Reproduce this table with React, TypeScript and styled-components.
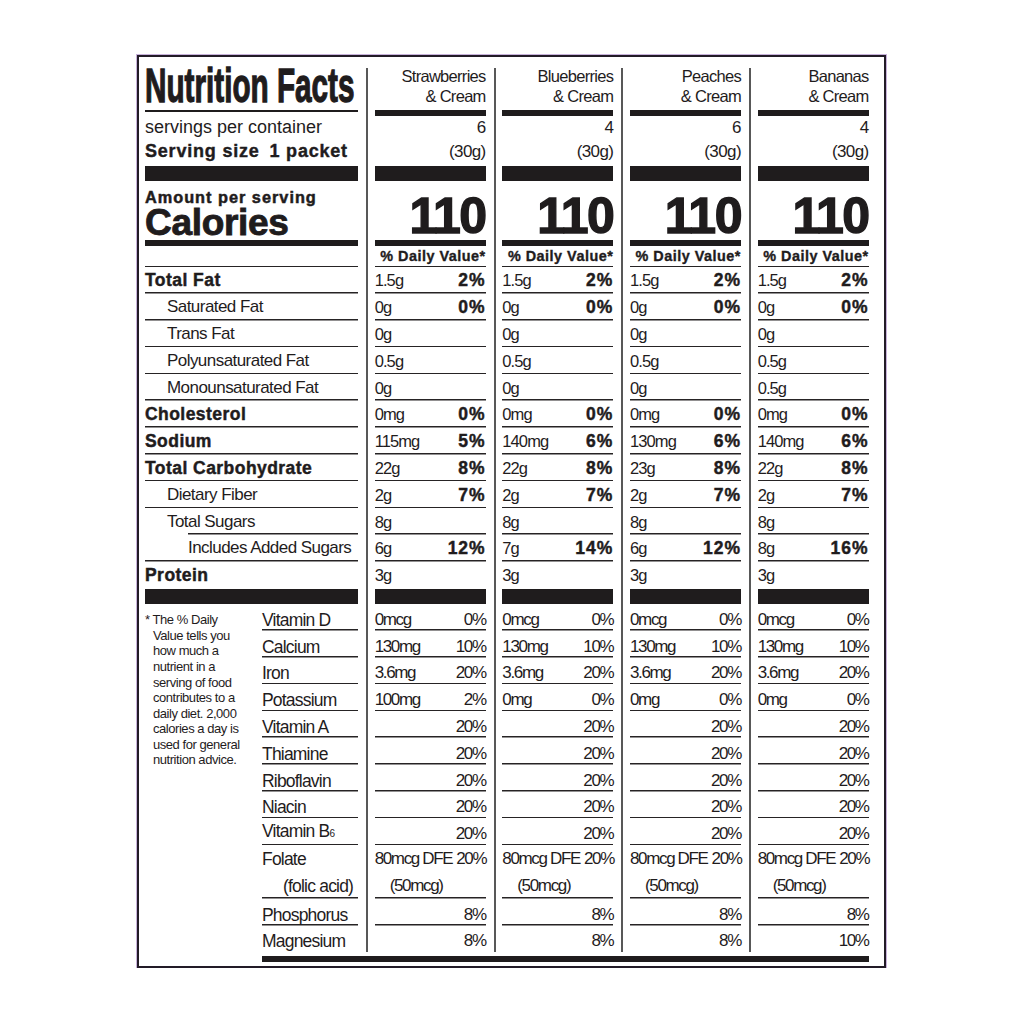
import React from 'react';
import styled, { createGlobalStyle, css } from 'styled-components';

const INK = '#1f1c1d';
const LINE = '#262324';
const ROW = 26.8;

type Nutrient = { label: string; bold?: boolean; indent?: number; lineIndent?: number };
type Flavor = {
  name: [string, string];
  servings: string;
  macros: [string, string?][];
  vitamins: [string, string][];
};

const NUTRIENTS: Nutrient[] = [
  { label: 'Total Fat', bold: true },
  { label: 'Saturated Fat', indent: 22 },
  { label: 'Trans Fat', indent: 22 },
  { label: 'Polyunsaturated Fat', indent: 22 },
  { label: 'Monounsaturated Fat', indent: 22 },
  { label: 'Cholesterol', bold: true },
  { label: 'Sodium', bold: true },
  { label: 'Total Carbohydrate', bold: true },
  { label: 'Dietary Fiber', indent: 22 },
  { label: 'Total Sugars', indent: 22, lineIndent: 43 },
  { label: 'Includes Added Sugars', indent: 43 },
  { label: 'Protein', bold: true },
];

const VITAMINS = [
  'Vitamin D',
  'Calcium',
  'Iron',
  'Potassium',
  'Vitamin A',
  'Thiamine',
  'Riboflavin',
  'Niacin',
  'Vitamin B6',
  'Folate',
  'Phosphorus',
  'Magnesium',
];

const sameVitamins = (potassium: [string, string], magnesium: string): [string, string][] => [
  ['0mcg', '0%'],
  ['130mg', '10%'],
  ['3.6mg', '20%'],
  potassium,
  ['', '20%'],
  ['', '20%'],
  ['', '20%'],
  ['', '20%'],
  ['', '20%'],
  ['80mcg DFE', '20%'],
  ['', '8%'],
  ['', magnesium],
];

const FLAVORS: Flavor[] = [
  {
    name: ['Strawberries', '& Cream'],
    servings: '6',
    macros: [
      ['1.5g', '2%'], ['0g', '0%'], ['0g'], ['0.5g'], ['0g'], ['0mg', '0%'],
      ['115mg', '5%'], ['22g', '8%'], ['2g', '7%'], ['8g'], ['6g', '12%'], ['3g'],
    ],
    vitamins: sameVitamins(['100mg', '2%'], '8%'),
  },
  {
    name: ['Blueberries', '& Cream'],
    servings: '4',
    macros: [
      ['1.5g', '2%'], ['0g', '0%'], ['0g'], ['0.5g'], ['0g'], ['0mg', '0%'],
      ['140mg', '6%'], ['22g', '8%'], ['2g', '7%'], ['8g'], ['7g', '14%'], ['3g'],
    ],
    vitamins: sameVitamins(['0mg', '0%'], '8%'),
  },
  {
    name: ['Peaches', '& Cream'],
    servings: '6',
    macros: [
      ['1.5g', '2%'], ['0g', '0%'], ['0g'], ['0.5g'], ['0g'], ['0mg', '0%'],
      ['130mg', '6%'], ['23g', '8%'], ['2g', '7%'], ['8g'], ['6g', '12%'], ['3g'],
    ],
    vitamins: sameVitamins(['0mg', '0%'], '8%'),
  },
  {
    name: ['Bananas', '& Cream'],
    servings: '4',
    macros: [
      ['1.5g', '2%'], ['0g', '0%'], ['0g'], ['0.5g'], ['0.5g'], ['0mg', '0%'],
      ['140mg', '6%'], ['22g', '8%'], ['2g', '7%'], ['8g'], ['8g', '16%'], ['3g'],
    ],
    vitamins: sameVitamins(['0mg', '0%'], '10%'),
  },
];

const ruled = (indent: number) => css`
  background: linear-gradient(${LINE}, ${LINE}) right bottom / calc(100% - ${indent}px) 1.5px no-repeat;
`;

const App = (): JSX.Element => {
  return (
    <Page>
      <GlobalStyle />
      <Frame>
        <Columns>
          <LabelCol>
            <HeadCell>
              <Title>Nutrition Facts</Title>
            </HeadCell>
            <Rule $h={6} $thin />
            <ServCell>
              <div>servings per container</div>
              <ServBold>Serving size{'\u2002'}1 packet</ServBold>
            </ServCell>
            <Rule $h={15} />
            <CalCell>
              <AmountLine>Amount per serving</AmountLine>
              <CaloriesLine>Calories</CaloriesLine>
            </CalCell>
            <Rule $h={6} />
            <DvCell />
            {NUTRIENTS.map((n, i) => (
              <NutRow
                key={n.label}
                $pad={n.indent}
                $lineIndent={n.lineIndent}
                $noLine={i === NUTRIENTS.length - 1}
              >
                <NutLabel $bold={n.bold}>{n.label}</NutLabel>
              </NutRow>
            ))}
            <Rule $h={15.4} />
            <Lower>
              <Footnote>
                * The % Daily
                <br />
                Value tells you
                <br />
                how much a
                <br />
                nutrient in a
                <br />
                serving of food
                <br />
                contributes to a
                <br />
                daily diet. 2,000
                <br />
                calories a day is
                <br />
                used for general
                <br />
                nutrition advice.
              </Footnote>
              <VitList>
                {VITAMINS.map((v, i) =>
                  v === 'Folate' ? (
                    <TallRow key={v}>
                      <SubLine>
                        <VitLabel>Folate</VitLabel>
                      </SubLine>
                      <SubLine $pad={21}>
                        <VitLabel>(folic acid)</VitLabel>
                      </SubLine>
                    </TallRow>
                  ) : (
                    <VitRow key={v} $noLine={i === VITAMINS.length - 1}>
                      <VitLabel>
                        {v === 'Vitamin B6' ? (
                          <>
                            Vitamin B<Sub>6</Sub>
                          </>
                        ) : (
                          v
                        )}
                      </VitLabel>
                    </VitRow>
                  ),
                )}
              </VitList>
            </Lower>
          </LabelCol>

          {FLAVORS.map((f) => (
            <DataCol key={f.name[0]}>
              <NameCell>
                <div>{f.name[0]}</div>
                <div>{f.name[1]}</div>
              </NameCell>
              <Rule $h={6} />
              <ServValue>
                <div>{f.servings}</div>
                <div>(30g)</div>
              </ServValue>
              <Rule $h={15} />
              <CalValue>110</CalValue>
              <Rule $h={6} />
              <DvCell>
                <DvText>% Daily Value*</DvText>
              </DvCell>
              {f.macros.map(([amt, pct], i) => (
                <NutRow key={i} $noLine={i === f.macros.length - 1}>
                  <Amount>{amt}</Amount>
                  {pct && <BoldPct>{pct}</BoldPct>}
                </NutRow>
              ))}
              <Rule $h={15.4} />
              {f.vitamins.map(([amt, pct], i) =>
                VITAMINS[i] === 'Folate' ? (
                  <TallRow key={i}>
                    <SubLine>
                      <VitValue>{amt}</VitValue>
                      <VitValue>{pct}</VitValue>
                    </SubLine>
                    <SubLine $pad={15}>
                      <VitValue>(50mcg)</VitValue>
                    </SubLine>
                  </TallRow>
                ) : (
                  <VitRow key={i} $noLine={i === f.vitamins.length - 1}>
                    <VitValue>{amt}</VitValue>
                    <VitValue>{pct}</VitValue>
                  </VitRow>
                ),
              )}
            </DataCol>
          ))}
        </Columns>
        <BottomBar />
      </Frame>
    </Page>
  );
};

export default App;

const GlobalStyle = createGlobalStyle`
  *, *::before, *::after {
    box-sizing: border-box;
  }

  html, body {
    margin: 0;
    padding: 0;
    background: #fff;
  }

  body {
    font-family: "Liberation Sans", Arial, sans-serif;
    color: ${INK};
  }
`;

const Page = styled.div`
  padding: 55px 0 0 137px;
`;

const Frame = styled.div`
  width: 748.67px;
  padding: 11px 15px 4px 6px;
  border: 2px solid #221b27;
  box-shadow: 0 0 0 1px #c7b2da;
`;

const Columns = styled.div`
  display: flex;
  align-items: stretch;
`;

const LabelCol = styled.div`
  flex: none;
  width: 213px;
  display: flex;
  flex-direction: column;
`;

const DataCol = styled.div`
  flex: none;
  width: 119.67px;
  margin-left: 8px;
  padding-left: 6.67px;
  border-left: 2px solid #585858;
  display: flex;
  flex-direction: column;
`;

const Rule = styled.div<{ $h: number; $thin?: boolean }>`
  flex: none;
  height: ${(p) => p.$h}px;
  background: ${(p) =>
    p.$thin ? `linear-gradient(${INK}, ${INK}) left top / 100% 2px no-repeat` : INK};
`;

const HeadCell = styled.div`
  flex: none;
  height: 42px;
  white-space: nowrap;
`;

const Title = styled.h1`
  display: inline-block;
  margin: 0;
  font-size: 47.5px;
  line-height: 35px;
  font-weight: 700;
  -webkit-text-stroke: 1.3px ${INK};
  transform: scaleX(0.625);
  transform-origin: left top;
`;

const NameCell = styled.div`
  flex: none;
  height: 42px;
  padding-bottom: 4px;
  display: flex;
  flex-direction: column;
  justify-content: flex-end;
  align-items: flex-end;
  font-size: 16.5px;
  line-height: 20px;
  letter-spacing: -0.7px;
  white-space: nowrap;
`;

const ServCell = styled.div`
  flex: none;
  height: 50px;
  font-size: 18px;
  line-height: 23.5px;
  white-space: nowrap;
`;

const ServBold = styled.div`
  font-weight: 700;
  letter-spacing: 0.8px;
  -webkit-text-stroke: 0.4px ${INK};
`;

const ServValue = styled.div`
  flex: none;
  height: 50px;
  text-align: right;
  font-size: 17px;
  line-height: 23.5px;
  letter-spacing: -0.6px;
`;

const CalCell = styled.div`
  flex: none;
  height: 59px;
  padding-top: 6.9px;
  font-weight: 700;
  white-space: nowrap;
`;

const AmountLine = styled.div`
  font-size: 16.3px;
  line-height: 18.5px;
  letter-spacing: 1px;
  -webkit-text-stroke: 0.5px ${INK};
`;

const CaloriesLine = styled.div`
  margin-top: 1px;
  font-size: 37px;
  line-height: 32px;
  letter-spacing: -0.3px;
  -webkit-text-stroke: 0.9px ${INK};
`;

const CalValue = styled.div`
  flex: none;
  height: 59px;
  padding-top: 9.7px;
  text-align: right;
  font-size: 50px;
  line-height: 50px;
  font-weight: 700;
  letter-spacing: -1.5px;
  -webkit-text-stroke: 1.4px ${INK};
`;

const DvCell = styled.div`
  flex: none;
  height: 21px;
  display: flex;
  justify-content: flex-end;
  align-items: center;
  ${ruled(0)}
`;

const DvText = styled.span`
  font-size: 14.4px;
  line-height: 21px;
  font-weight: 700;
  letter-spacing: 0.5px;
  white-space: nowrap;
  -webkit-text-stroke: 0.35px ${INK};
`;

const NutRow = styled.div<{ $pad?: number; $lineIndent?: number; $noLine?: boolean }>`
  flex: none;
  height: ${ROW}px;
  display: flex;
  align-items: center;
  justify-content: space-between;
  padding-left: ${(p) => p.$pad ?? 0}px;
  line-height: 20px;
  white-space: nowrap;
  ${(p) => !p.$noLine && ruled(p.$lineIndent ?? 0)}
`;

const NutLabel = styled.span<{ $bold?: boolean }>`
  font-size: ${(p) => (p.$bold ? 17.5 : 17)}px;
  font-weight: ${(p) => (p.$bold ? 700 : 400)};
  letter-spacing: ${(p) => (p.$bold ? 0.45 : -0.55)}px;
  -webkit-text-stroke: ${(p) => (p.$bold ? `0.45px ${INK}` : '0')};
`;

const Amount = styled.span`
  font-size: 16.5px;
  letter-spacing: -0.9px;
`;

const BoldPct = styled.span`
  font-size: 17.5px;
  font-weight: 700;
  letter-spacing: 1px;
  -webkit-text-stroke: 0.45px ${INK};
`;

const Lower = styled.div`
  display: flex;
`;

const Footnote = styled.p`
  flex: none;
  width: 117px;
  margin: 0;
  padding: 8.2px 0 0 8px;
  text-indent: -8px;
  font-size: 13px;
  line-height: 15.6px;
  letter-spacing: -0.45px;
  white-space: nowrap;
`;

const VitList = styled.div`
  flex: 1;
  display: flex;
  flex-direction: column;
`;

const VitRow = styled.div<{ $noLine?: boolean }>`
  flex: none;
  height: ${ROW}px;
  display: flex;
  align-items: flex-end;
  justify-content: space-between;
  padding-bottom: 1px;
  line-height: 20px;
  white-space: nowrap;
  ${(p) => !p.$noLine && ruled(0)}
`;

const TallRow = styled.div`
  flex: none;
  height: ${ROW * 2}px;
  display: flex;
  flex-direction: column;
  ${ruled(0)}
`;

const SubLine = styled.div<{ $pad?: number }>`
  height: ${ROW}px;
  display: flex;
  align-items: flex-end;
  justify-content: space-between;
  gap: 4px;
  padding: 0 0 3px ${(p) => p.$pad ?? 0}px;
  line-height: 20px;
  white-space: nowrap;
`;

const VitLabel = styled.span`
  font-size: 17.5px;
  letter-spacing: -0.8px;
`;

const Sub = styled.span`
  font-size: 10px;
  letter-spacing: 0;
`;

const VitValue = styled.span`
  font-size: 17px;
  letter-spacing: -1.35px;
`;

const BottomBar = styled.div`
  height: 6px;
  margin: 3.6px 0 0 117px;
  background: ${INK};
`;
